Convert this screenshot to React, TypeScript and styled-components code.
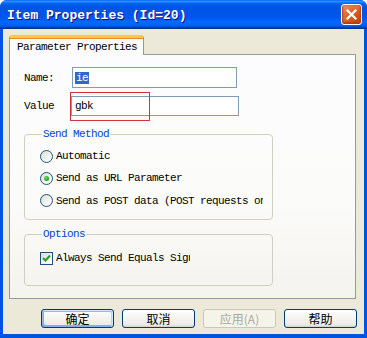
import styled, { createGlobalStyle, css } from 'styled-components'

const GlobalStyle = createGlobalStyle`
  body {
    margin: 0;
    background: #ffffff;
  }
`

const mono = `"Liberation Mono", "DejaVu Sans Mono", "Courier New", monospace`
const cjk = `"Noto Sans CJK SC", "Liberation Sans", sans-serif`

const Window = styled.div`
  width: 367px;
  height: 338px;
  display: flex;
  flex-direction: column;
  background: #0054e3;
  border-radius: 7px 7px 0 0;
  overflow: hidden;
  font-family: ${mono};
`

const TitleBar = styled.div`
  height: 29px;
  flex: none;
  display: flex;
  align-items: center;
  justify-content: space-between;
  padding: 0 5px 0 7px;
  background: linear-gradient(
    180deg,
    #0058ee 0%,
    #3593ff 4%,
    #288eff 6%,
    #127dff 8%,
    #036ffc 10%,
    #0262ee 14%,
    #0057e5 20%,
    #0054e3 24%,
    #0055eb 56%,
    #005bf5 66%,
    #026afe 76%,
    #0062ef 86%,
    #0052d6 92%,
    #0040ab 94%,
    #003092 100%
  );
`

const Title = styled.span`
  color: #ffffff;
  font-family: ${mono};
  font-weight: bold;
  font-size: 13px;
  text-shadow: 1px 1px #0f1089;
  padding-top: 1px;
`

const CloseButton = styled.button`
  width: 21px;
  height: 21px;
  padding: 0;
  display: flex;
  align-items: center;
  justify-content: center;
  border: 1px solid #ffffff;
  border-radius: 3px;
  background: radial-gradient(circle at 80% 85%, #cc4600 0%, #dc6527 50%, #e9844f 80%, #f0a077 100%);
  box-shadow: inset 0 -1px 2px 1px #b33b0a;
`

const Body = styled.div`
  flex: 1;
  margin: 0 3px 4px;
  padding: 6px 8px 0 6px;
  background: #ece9d8;
  display: flex;
  flex-direction: column;
`

const Tab = styled.div`
  position: relative;
  z-index: 1;
  width: 135px;
  height: 20px;
  box-sizing: border-box;
  margin-bottom: -1px;
  padding: 0 0 0 7px;
  display: flex;
  align-items: center;
  background: #fcfcfe;
  border: 1px solid #919b9c;
  border-top: 3px solid #ffc83c;
  border-bottom: none;
  border-radius: 3px 3px 0 0;
  box-shadow: inset 0 1px #e68b2c;
  font-size: 11px;
  letter-spacing: -0.6px;
  color: #000;
`

const Panel = styled.div`
  width: 347px;
  height: 245px;
  box-sizing: border-box;
  border: 1px solid #919b9c;
  background: linear-gradient(180deg, #fcfcfe 0%, #fbfbf9 60%, #f4f3ee 100%);
  padding: 12px 0 0 14px;
  display: flex;
  flex-direction: column;
`

const FieldRow = styled.div<{ $gap?: number }>`
  position: relative;
  display: flex;
  align-items: center;
  margin-top: ${(p) => p.$gap ?? 0}px;
`

const Label = styled.span<{ $w: number }>`
  width: ${(p) => p.$w}px;
  font-size: 11px;
  letter-spacing: -0.6px;
  color: #000;
`

const TextBox = styled.div<{ $w: number; $h: number; $pad?: number }>`
  width: ${(p) => p.$w}px;
  height: ${(p) => p.$h}px;
  box-sizing: border-box;
  border: 1px solid #7f9db9;
  background: #ffffff;
  display: flex;
  align-items: center;
  padding-left: ${(p) => p.$pad ?? 2}px;
  font-size: 11px;
  letter-spacing: -0.6px;
  color: #000;
  white-space: pre;
`

const Selected = styled.span`
  background: #316ac5;
  color: #ffffff;
  padding: 0 1px;
  line-height: 12px;
`

const Highlight = styled.div`
  position: absolute;
  left: 46px;
  top: -4px;
  width: 80px;
  height: 29px;
  box-sizing: border-box;
  border: 1px solid #d2323c;
  pointer-events: none;
`

const Group = styled.fieldset<{ $h: number; $gap: number }>`
  width: 249px;
  height: ${(p) => p.$h}px;
  box-sizing: border-box;
  margin: ${(p) => p.$gap}px 0 0 0;
  padding: 5px 0 0 15px;
  border: 1px solid #d0d0bf;
  border-radius: 4px;
  min-width: 0;
`

const Legend = styled.legend`
  padding: 0 1px;
  margin-left: 2px;
  line-height: 12px;
  font-size: 11px;
  letter-spacing: -0.6px;
  color: #0046d5;
`

const OptionRow = styled.label<{ $h?: number; $top?: number }>`
  display: flex;
  align-items: center;
  height: ${(p) => p.$h ?? 22}px;
  margin-top: ${(p) => p.$top ?? 0}px;
  gap: 3px;
  font-size: 11px;
  letter-spacing: -0.6px;
  color: #000;
`

const OptionText = styled.span<{ $clip?: number }>`
  white-space: nowrap;
  overflow: hidden;
  ${(p) =>
    p.$clip &&
    css`
      width: ${p.$clip}px;
    `}
`

const RadioDot = styled.span<{ $on?: boolean }>`
  width: 13px;
  height: 13px;
  flex: none;
  box-sizing: border-box;
  border-radius: 50%;
  border: 1px solid #1c5180;
  background: linear-gradient(135deg, #dcdcd7 0%, #f4f4f0 60%, #ffffff 100%);
  display: flex;
  align-items: center;
  justify-content: center;
  &::after {
    content: '';
    display: ${(p) => (p.$on ? 'block' : 'none')};
    width: 5px;
    height: 5px;
    border-radius: 50%;
    background: radial-gradient(circle at 35% 35%, #61e05d 0%, #21a121 70%, #118811 100%);
  }
`

const CheckBox = styled.span`
  width: 13px;
  height: 13px;
  flex: none;
  box-sizing: border-box;
  border: 1px solid #1c5180;
  background: linear-gradient(135deg, #dcdcd7 0%, #f4f4f0 60%, #ffffff 100%);
  display: flex;
  align-items: center;
  justify-content: center;
`

const ButtonRow = styled.div`
  display: flex;
  justify-content: flex-end;
  gap: 8px;
  margin: 10px -1px 0 0;
`

const DialogButton = styled.button<{ $default?: boolean }>`
  width: 73px;
  height: 19px;
  padding: 0;
  border: 1px solid #003c74;
  border-radius: 3px;
  background: linear-gradient(180deg, #ffffff 0%, #f4f3ee 50%, #ecebe6 86%, #d6d0c5 100%);
  font-family: ${cjk};
  font-size: 12px;
  line-height: 17px;
  color: #000;
  ${(p) =>
    p.$default &&
    css`
      box-shadow: inset -1px 1px #cee7ff, inset 1px 2px #98b8ea, inset -2px 2px #bcd4f6,
        inset 1px -1px #89ade4, inset 2px -2px #89ade4;
    `}
  &:disabled {
    border-color: #c9c7ba;
    background: #f5f4ea;
    color: #aca899;
  }
`

function App() {
  return (
    <>
      <GlobalStyle />
      <Window>
        <TitleBar>
          <Title>Item Properties (Id=20)</Title>
          <CloseButton>
            <svg width="11" height="11" viewBox="0 0 11 11">
              <path d="M1.5 1.5 L9.5 9.5 M9.5 1.5 L1.5 9.5" stroke="#fff" strokeWidth="2.2" strokeLinecap="square" />
            </svg>
          </CloseButton>
        </TitleBar>
        <Body>
          <Tab>Parameter Properties</Tab>
          <Panel>
            <FieldRow>
              <Label $w={48}>Name:</Label>
              <TextBox $w={165} $h={21}>
                <Selected>ie</Selected>
              </TextBox>
            </FieldRow>
            <FieldRow $gap={8}>
              <Label $w={47}>Value</Label>
              <TextBox $w={168} $h={20} $pad={3}>
                gbk
              </TextBox>
              <Highlight />
            </FieldRow>
            <Group $h={92} $gap={12}>
              <Legend>Send Method</Legend>
              <OptionRow>
                <RadioDot />
                <OptionText>Automatic</OptionText>
              </OptionRow>
              <OptionRow>
                <RadioDot $on />
                <OptionText>Send as URL Parameter</OptionText>
              </OptionRow>
              <OptionRow $h={23}>
                <RadioDot />
                <OptionText $clip={207}>Send as POST data (POST requests only)</OptionText>
              </OptionRow>
            </Group>
            <Group $h={58} $gap={8}>
              <Legend>Options</Legend>
              <OptionRow $top={2}>
                <CheckBox>
                  <svg width="9" height="9" viewBox="0 0 9 9">
                    <path d="M1 4 L3.5 6.5 L8 1.5" fill="none" stroke="#21a121" strokeWidth="2" />
                  </svg>
                </CheckBox>
                <OptionText $clip={134}>Always Send Equals Sign</OptionText>
              </OptionRow>
            </Group>
          </Panel>
          <ButtonRow>
            <DialogButton $default>确定</DialogButton>
            <DialogButton>取消</DialogButton>
            <DialogButton disabled>应用(A)</DialogButton>
            <DialogButton>帮助</DialogButton>
          </ButtonRow>
        </Body>
      </Window>
    </>
  )
}

export default App
